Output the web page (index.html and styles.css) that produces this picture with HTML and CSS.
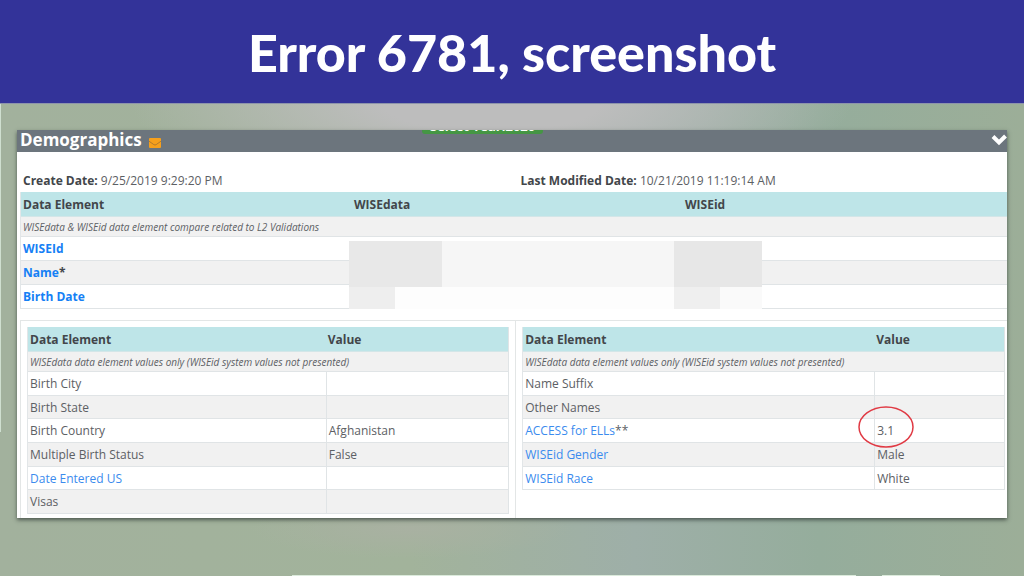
FILE: index.html
```html
<!DOCTYPE html>
<html lang="en">
<head>
<meta charset="utf-8">
<meta name="viewport" content="width=device-width, initial-scale=1">
<title>Error 6781, screenshot</title>
<link rel="stylesheet" href="styles.css">
</head>
<body>
<header class="banner"><h1 class="title">Error 6781, screenshot</h1></header>
<main class="stage">
  <section class="panel">
    <div class="panel-head">
      <h2 class="panel-title">Demographics</h2>
      <svg class="mail" viewBox="0 0 12 10" aria-hidden="true"><rect width="12" height="10" rx="1" fill="#f6a01c"/><path d="M0 3.2 4.8 6.6Q6 7.4 7.2 6.6L12 3.2" fill="none" stroke="#a9762f" stroke-width=".9"/></svg>
      <span class="year">Select Year:2020</span>
      <button class="toggle" type="button" aria-label="Collapse Demographics"><svg class="chevron" viewBox="0 0 16 12" aria-hidden="true"><path d="M2 2.500 8 8.500 14.500 2" fill="none" stroke="#fff" stroke-width="4"/></svg></button>
    </div>
    <div class="dates">
      <p class="date"><strong>Create Date:</strong> 9/25/2019 9:29:20 PM</p>
      <p class="date"><strong>Last Modified Date:</strong> 10/21/2019 11:19:14 AM</p>
    </div>
    <div class="compare">
      <table class="grid grid-main">
        <colgroup><col class="third"><col class="third"><col></colgroup>
        <thead><tr><th scope="col">Data Element</th><th scope="col">WISEdata</th><th scope="col">WISEid</th></tr></thead>
        <tbody>
          <tr class="note"><td colspan="3">WISEdata &amp; WISEid data element compare related to L2 Validations</td></tr>
          <tr><th scope="row"><a href="#wiseid">WISEId</a></th><td></td><td></td></tr>
          <tr><th scope="row"><a href="#name">Name</a>*</th><td></td><td></td></tr>
          <tr><th scope="row"><a href="#birth-date">Birth Date</a></th><td></td><td></td></tr>
        </tbody>
      </table>
      <svg class="mask" viewBox="0 0 413 68" preserveAspectRatio="none" aria-hidden="true">
        <rect width="413" height="68" fill="#fdfdfd"/>
        <rect width="413" height="46" fill="#f6f6f6"/>
        <rect width="93" height="46" fill="#e8e8e8"/>
        <rect y="46" width="46" height="22" fill="#eeeeee"/>
        <rect x="325" width="88" height="46" fill="#e7e7e7"/>
        <rect x="325" y="46" width="46" height="22" fill="#efefef"/>
        <rect x="371" y="46" width="42" height="22" fill="#fafafa"/>
      </svg>
    </div>
    <div class="split">
      <div class="box">
        <table class="grid grid-left">
          <colgroup><col class="label-left"><col></colgroup>
          <thead><tr><th scope="col">Data Element</th><th scope="col">Value</th></tr></thead>
          <tbody>
            <tr class="note"><td colspan="2">WISEdata data element values only (WISEid system values not presented)</td></tr>
            <tr><td>Birth City</td><td></td></tr>
            <tr><td>Birth State</td><td></td></tr>
            <tr><td>Birth Country</td><td>Afghanistan</td></tr>
            <tr><td>Multiple Birth Status</td><td>False</td></tr>
            <tr><td><a href="#date-entered">Date Entered US</a></td><td></td></tr>
            <tr><td>Visas</td><td></td></tr>
          </tbody>
        </table>
      </div>
      <div class="box box-right">
        <table class="grid grid-right">
          <colgroup><col class="label-right"><col></colgroup>
          <thead><tr><th scope="col">Data Element</th><th scope="col">Value</th></tr></thead>
          <tbody>
            <tr class="note"><td colspan="2">WISEdata data element values only (WISEid system values not presented)</td></tr>
            <tr><td>Name Suffix</td><td></td></tr>
            <tr><td>Other Names</td><td></td></tr>
            <tr><td><a href="#access">ACCESS for ELLs</a>**</td><td><span class="marked">3.1<svg class="ring" viewBox="0 0 56 42" aria-hidden="true"><ellipse cx="28" cy="21" rx="27" ry="20" fill="none" stroke="#e03a44" stroke-width="1.500"/></svg></span></td></tr>
            <tr><td><a href="#gender">WISEid Gender</a></td><td>Male</td></tr>
            <tr><td><a href="#race">WISEid Race</a></td><td>White</td></tr>
          </tbody>
        </table>
      </div>
    </div>
  </section>
</main>
</body>
</html>
```
FILE: styles.css
```css
* { box-sizing: border-box; }
body {
  margin: 0;
  min-height: 100vh;
  display: flex;
  flex-direction: column;
  background: #9fb09b;
  color: #5c6064;
  font: 12px/16px "Open Sans", "Noto Sans", sans-serif;
}
.banner {
  padding: 20px 16px 19px;
  background: #333399;
  text-align: center;
}
.title {
  margin: 0;
  color: #fff;
  font: 900 52px/64px Lato, sans-serif;
}
.stage {
  flex: 1;
  padding: 26px 17px 32px;
  border-top: 1px solid #8d94ab;
  background:
    linear-gradient(#dcebdc, #dcebdc) 292px 100% / 564px 1px no-repeat,
    linear-gradient(#dcebdc, #dcebdc) 882px 100% / 58px 1px no-repeat,
    linear-gradient(#cfdfd0, #cfdfd0) 0 0 / 1px 328px no-repeat,
    radial-gradient(ellipse 360px 90px at 48% 0, #bdbdbd 30%, transparent),
    radial-gradient(ellipse 160px 30px at 40% 90%, #a9b1a2, transparent),
    linear-gradient(90deg, #a2b19d, #a2b39b 40%, #9eafa8 62%, #95ad9c 80%, #9cae98);
}
.panel {
  background: #fff;
  overflow: hidden;
  box-shadow: 0 2px 4px rgba(40, 50, 45, .7);
}
.panel-head {
  position: relative;
  display: flex;
  align-items: center;
  padding-left: 3px;
  background: #6c757d;
  overflow: hidden;
}
.panel-title {
  margin: 0;
  padding-bottom: 2px;
  color: #fff;
  font-size: 17px;
  line-height: 20px;
}
.mail { width: 12px; height: 10px; margin: 3px 0 0 7px; }
.year {
  position: absolute;
  top: -12px;
  left: 405px;
  padding: 0 8px;
  border-radius: 3px;
  background: #459644;
  color: #fff;
  font-size: 13px;
  font-weight: 700;
}
.toggle {
  display: flex;
  margin-left: auto;
  padding: 0 0 2px;
  border: 0;
  background: none;
}
.chevron { width: 16px; height: 12px; }
.dates { display: flex; padding: 21px 0 3px 6px; }
.date { flex: 1; margin: 0; }
.date + .date { padding-left: 11px; }
strong { color: #42464a; }
a { color: #3b8bee; text-decoration: none; }
th a { color: #1580f5; }
.compare { position: relative; padding-left: 3px; }
.mask {
  position: absolute;
  left: 332px;
  top: 49px;
  width: 413px;
  height: 68px;
}
.grid {
  width: 100%;
  table-layout: fixed;
  border-collapse: separate;
  border-spacing: 0;
  border-left: 1px solid #e2e6e8;
}
.grid th, .grid td {
  height: 24px;
  padding: 1px 2px 0;
  border-bottom: 1px solid #e0e4e6;
  text-align: left;
}
.grid th { color: #42464a; }
.grid thead th {
  height: 25px;
  background: #bee5e8;
  border-bottom-color: #d3e6e8;
}
.grid .note td {
  height: 20px;
  font-size: 10px;
  line-height: 12px;
  font-style: italic;
}
.grid tbody tr:nth-child(odd) { background: #f1f1f1; }
.grid-main .third { width: 331px; }
.label-left { width: 62%; }
.label-right { width: 73%; }
.split {
  display: grid;
  grid-template-columns: 201fr 200fr;
  margin: 11px 0 0 3px;
  border-top: 1px solid #e3e6e6;
  border-left: 1px solid #e3e6e6;
}
.box { padding: 6px 6px 4px; }
.box-right { border-left: 1px solid #e3e6e6; padding-right: 2px; }
.box .grid { border-right: 1px solid #e0e4e6; }
.box tbody td + td { border-left: 1px solid #e0e4e6; }
.box .grid tbody tr:nth-child(3n) td { height: 23px; }
.marked { position: relative; }
.ring {
  position: absolute;
  left: -19px;
  top: -16px;
  width: 56px;
  height: 42px;
}
```
